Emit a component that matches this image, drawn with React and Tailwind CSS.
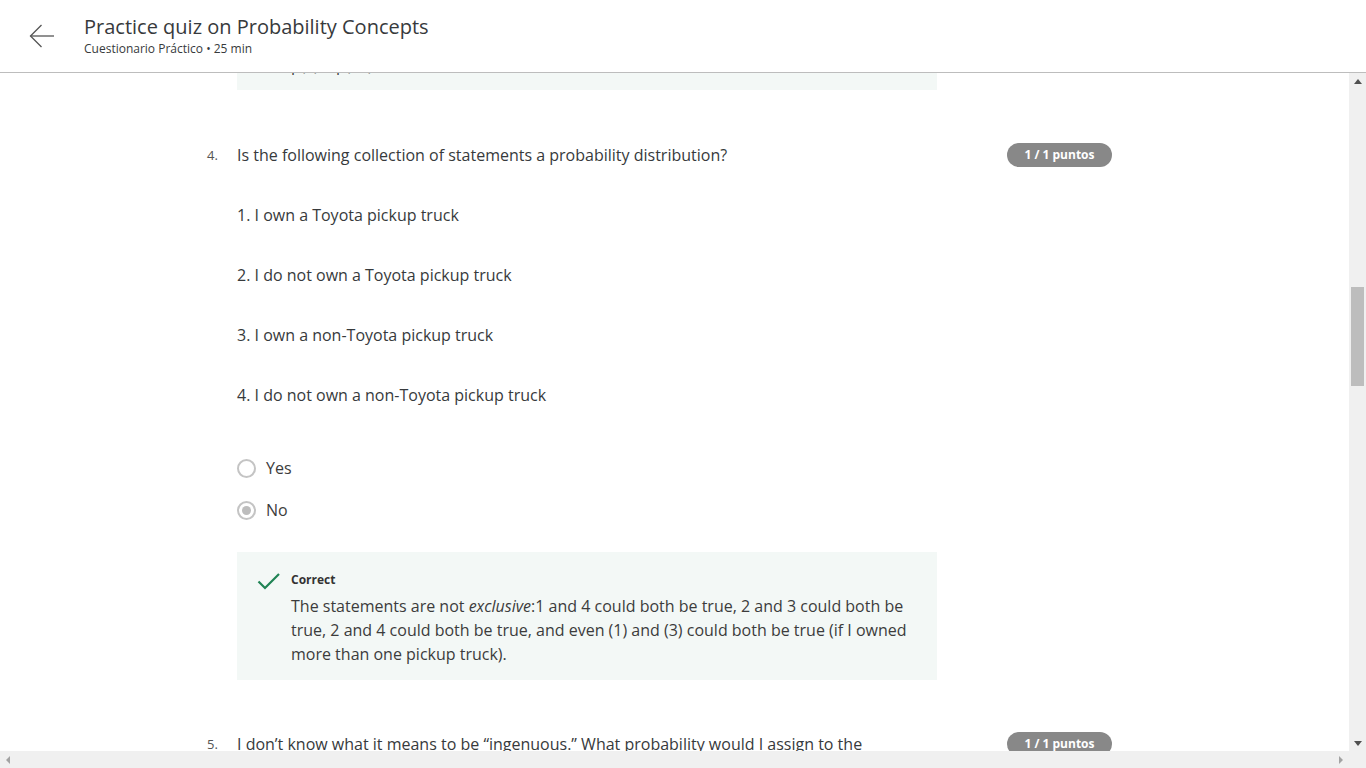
import React from "react";

const font = { fontFamily: '"Open Sans", "Noto Sans", sans-serif' };

function Badge() {
  return (
    <div className="flex h-[24px] w-[105px] shrink-0 items-center justify-center rounded-full bg-[#888888] text-[12px] font-bold text-white">
      1 / 1 puntos
    </div>
  );
}

function Radio({ checked, label }) {
  return (
    <div className="flex h-[24px] items-center">
      <div className="flex h-[19px] w-[19px] items-center justify-center rounded-full border-2 border-[#c4c4c4] bg-white">
        {checked && <div className="h-[9px] w-[9px] rounded-full bg-[#bdbdbd]" />}
      </div>
      <span className="ml-[10px] text-[16px] text-[#3c3c3c]">{label}</span>
    </div>
  );
}

export default function App() {
  return (
    <div className="flex h-screen w-full flex-col overflow-hidden bg-white text-[#373a3c]" style={font}>
      <header className="relative z-10 flex h-[73px] shrink-0 items-start border-b border-[#bdbdbd] bg-white">
        <div className="ml-[29px] mt-[24px] flex h-[24px] w-[26px] items-center">
          <svg width="26" height="24" viewBox="0 0 26 24" fill="none" stroke="#555" strokeWidth="1.3">
            <path d="M1.5 12 H25" />
            <path d="M12.5 1 L1.5 12 L12.5 23" />
          </svg>
        </div>
        <div className="ml-[29px] mt-[13px] flex flex-col">
          <div className="text-[20px] leading-[28px] text-[#373a3c]">Practice quiz on Probability Concepts</div>
          <div className="text-[12px] leading-[16px] text-[#373a3c]">Cuestionario Práctico • 25 min</div>
        </div>
      </header>

      <div className="flex min-h-0 flex-1">
        <div className="flex min-w-0 flex-1 flex-col">
          <main className="min-h-0 flex-1 overflow-hidden">
            <div className="ml-[207px] w-[905px]">
              <div className="ml-[30px] -mt-[60px] h-[77px] w-[700px] bg-[#f3f8f6] pl-[54px] pt-[40px] text-[16px] leading-[24px] text-[#3c3c3c]">
                p(x) + p(¬x) = 1
              </div>

              <div className="mt-[53px] flex items-start">
                <div className="w-[30px] text-[13px] leading-[24px] text-[#555]">4.</div>
                <div className="flex-1">
                  <div className="flex items-start justify-between">
                    <p className="text-[16px] leading-[24px]">Is the following collection of statements a probability distribution?</p>
                    <Badge />
                  </div>
                  <div className="mt-[36px] flex flex-col gap-[36px] text-[16px] leading-[24px]">
                    <p>1. I own a Toyota pickup truck</p>
                    <p>2. I do not own a Toyota pickup truck</p>
                    <p>3. I own a non-Toyota pickup truck</p>
                    <p>4. I do not own a non-Toyota pickup truck</p>
                  </div>
                  <div className="mt-[49px] flex flex-col gap-[18px]">
                    <Radio label="Yes" />
                    <Radio checked label="No" />
                  </div>
                  <div className="mt-[30px] flex h-[128px] w-[700px] bg-[#f3f8f6] pl-[20px] pt-[19px]">
                    <svg width="24" height="18" viewBox="0 0 24 18" fill="none" stroke="#1f8354" strokeWidth="2.2" className="mt-[1px]">
                      <path d="M1.5 9.5 L8 16 L22 2" />
                    </svg>
                    <div className="ml-[10px] flex-1 pr-[20px]">
                      <div className="text-[12px] font-bold leading-[18px] text-[#333]">Correct</div>
                      <p className="mt-[5px] text-[16px] leading-[24px] text-[#3c3c3c]">
                        The statements are not <em>exclusive</em>:1 and 4 could both be true, 2 and 3 could both be true, 2 and 4 could both be true, and even (1) and (3) could both be true (if I owned more than one pickup truck).
                      </p>
                    </div>
                  </div>
                </div>
              </div>

              <div className="mt-[52px] flex items-start">
                <div className="w-[30px] text-[13px] leading-[24px] text-[#555]">5.</div>
                <div className="flex flex-1 items-start justify-between">
                  <p className="text-[16px] leading-[24px]">I don’t know what it means to be “ingenuous.” What probability would I assign to the</p>
                  <Badge />
                </div>
              </div>
            </div>
          </main>
          <div className="flex h-[17px] shrink-0 items-center justify-between bg-[#f0f0f0] px-[5px]">
            <svg width="6" height="8" viewBox="0 0 6 8"><path d="M5 0 L5 8 L1 4 Z" fill="#a3a3a3" /></svg>
            <svg width="6" height="8" viewBox="0 0 6 8"><path d="M1 0 L1 8 L5 4 Z" fill="#a3a3a3" /></svg>
          </div>
        </div>
        <div className="flex w-[17px] shrink-0 flex-col bg-[#f0f0f0]">
          <div className="flex h-[17px] items-center justify-center">
            <svg width="8" height="5" viewBox="0 0 8 5"><path d="M0 5 L8 5 L4 0 Z" fill="#505050" /></svg>
          </div>
          <div className="mx-[2px] mt-[197px] h-[99px] bg-[#bdbdbd]" />
          <div className="flex-1" />
          <div className="flex h-[34px] items-start justify-center pt-[7px]">
            <svg width="8" height="5" viewBox="0 0 8 5"><path d="M0 0 L8 0 L4 5 Z" fill="#505050" /></svg>
          </div>
        </div>
      </div>
    </div>
  );
}
